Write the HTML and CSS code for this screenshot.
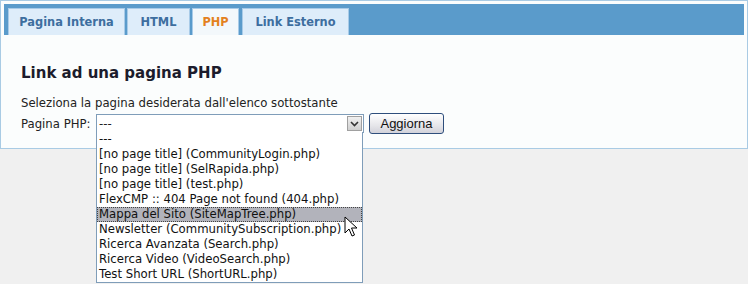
FILE: index.html
```html
<!DOCTYPE html>
<html lang="it">
<head>
  <meta charset="UTF-8" />
  <title>Link ad una pagina PHP</title>
  <link rel="stylesheet" href="styles.css">
</head>
<body>
  <div class="panel">
    <div class="tabbar">
      <div class="tab tab-int">Pagina Interna</div>
      <div class="tab tab-html">HTML</div>
      <div class="tab tab-php active">PHP</div>
      <div class="tab tab-ext">Link Esterno</div>
    </div>

    <div class="content">
      <h2>Link ad una pagina PHP</h2>
      <p>Seleziona la pagina desiderata dall'elenco sottostante</p>
      <div class="row">
        <label>Pagina PHP:</label>
        <div class="select-wrap">
          <div class="select">
            <span>---</span>
            <span class="arrow">
              <svg width="9" height="6" viewBox="0 0 9 6"><path d="M1 1 L4.5 4.5 L8 1" fill="none" stroke="#333" stroke-width="1.6"/></svg>
            </span>
          </div>
          <ul class="options">
            <li>---</li>
            <li>[no page title] (CommunityLogin.php)</li>
            <li>[no page title] (SelRapida.php)</li>
            <li>[no page title] (test.php)</li>
            <li>FlexCMP :: 404 Page not found (404.php)</li>
            <li class="hover">Mappa del Sito (SiteMapTree.php)</li>
            <li>Newsletter (CommunitySubscription.php)</li>
            <li>Ricerca Avanzata (Search.php)</li>
            <li>Ricerca Video (VideoSearch.php)</li>
            <li>Test Short URL (ShortURL.php)</li>
          </ul>
          <svg class="cursor" width="14" height="22" viewBox="0 0 14 22">
            <path d="M1 1 L1 17 L5 13 L8 20 L10.5 19 L7.5 12 L13 12 Z" fill="#fff" stroke="#000" stroke-width="1"/>
          </svg>
        </div>
        <button class="btn">Aggiorna</button>
      </div>
    </div>
  </div>
</body>
</html>
```

FILE: styles.css
```css
html {
  background-color: #f0f0f0;
}

body {
  margin: 0;
  min-height: 284px;
  background-color: #f0f0f0;
  font-family: "DejaVu Sans", Verdana, sans-serif;
  font-size: 11.7px;
  color: #222;
}

.panel {
  width: 748px;
  height: 149px;
  box-sizing: border-box;
  border: 1px solid #a9cbe4;
  background-color: #fbfdfd;
  padding: 3px 3px 0;
}

.tabbar {
  display: flex;
  gap: 2px;
  background-color: #5a9bcb;
  padding: 4px 4px 0;
  height: 27px;
}

.tab {
  box-sizing: border-box;
  height: 27px;
  background-color: #deedfa;
  border: 1px solid #a8cbe8;
  border-bottom: none;
  color: #3d6e9f;
  font-weight: bold;
  font-size: 11.4px;
  line-height: 26px;
  text-align: center;
  white-space: nowrap;
}

.tab-int { width: 117px; }
.tab-html { width: 63px; }
.tab-php { width: 47px; }
.tab-ext { width: 107px; margin-left: 1px; }

.tab.active {
  background-color: #f3f8fb;
  color: #e3811e;
}

.content {
  padding: 29px 17px 0;
}

.content h2 {
  margin: 0 0 13px;
  height: 19px;
  line-height: 19px;
  font-size: 15px;
  font-weight: bold;
  color: #1c1c2c;
}

.content p {
  margin: 0;
  line-height: 15px;
}

.row {
  display: flex;
  align-items: center;
  gap: 5px;
  margin-top: 2px;
}

.row label {
  width: 70px;
  flex-shrink: 0;
  white-space: nowrap;
}

.select-wrap {
  position: relative;
}

.select {
  box-sizing: border-box;
  width: 268px;
  height: 19px;
  border: 1px solid #7f9db9;
  background-color: #fff;
  display: flex;
  align-items: center;
  justify-content: space-between;
  padding-left: 2px;
}

.arrow {
  width: 15px;
  height: 15px;
  margin-right: 1px;
  background: linear-gradient(#f0f0f0, #d0d0d0);
  border: 1px solid #a0a0a0;
  box-sizing: border-box;
  display: flex;
  align-items: center;
  justify-content: center;
}

.options {
  position: absolute;
  left: 0;
  top: 18px;
  width: 267px;
  box-sizing: border-box;
  margin: 0;
  padding: 0;
  list-style: none;
  background-color: #fff;
  border: 1px solid #7f9db9;
  border-top: none;
  z-index: 2;
}

.options li {
  height: 15px;
  line-height: 15px;
  padding-left: 2px;
  white-space: nowrap;
  color: #111;
}

.options li.hover {
  background-color: #b2b3bb;
  outline: 1px dotted #444;
  outline-offset: -1px;
}

.cursor {
  position: absolute;
  left: 248px;
  top: 102px;
  z-index: 3;
}

.btn {
  height: 21px;
  width: 75px;
  padding: 0;
  border: 1px solid #2e4e7c;
  border-radius: 3px;
  background: linear-gradient(#ffffff, #e6e6ea 60%, #d2d2da);
  font-family: "Liberation Sans", Arial, sans-serif;
  font-size: 13px;
  color: #111;
}
```
